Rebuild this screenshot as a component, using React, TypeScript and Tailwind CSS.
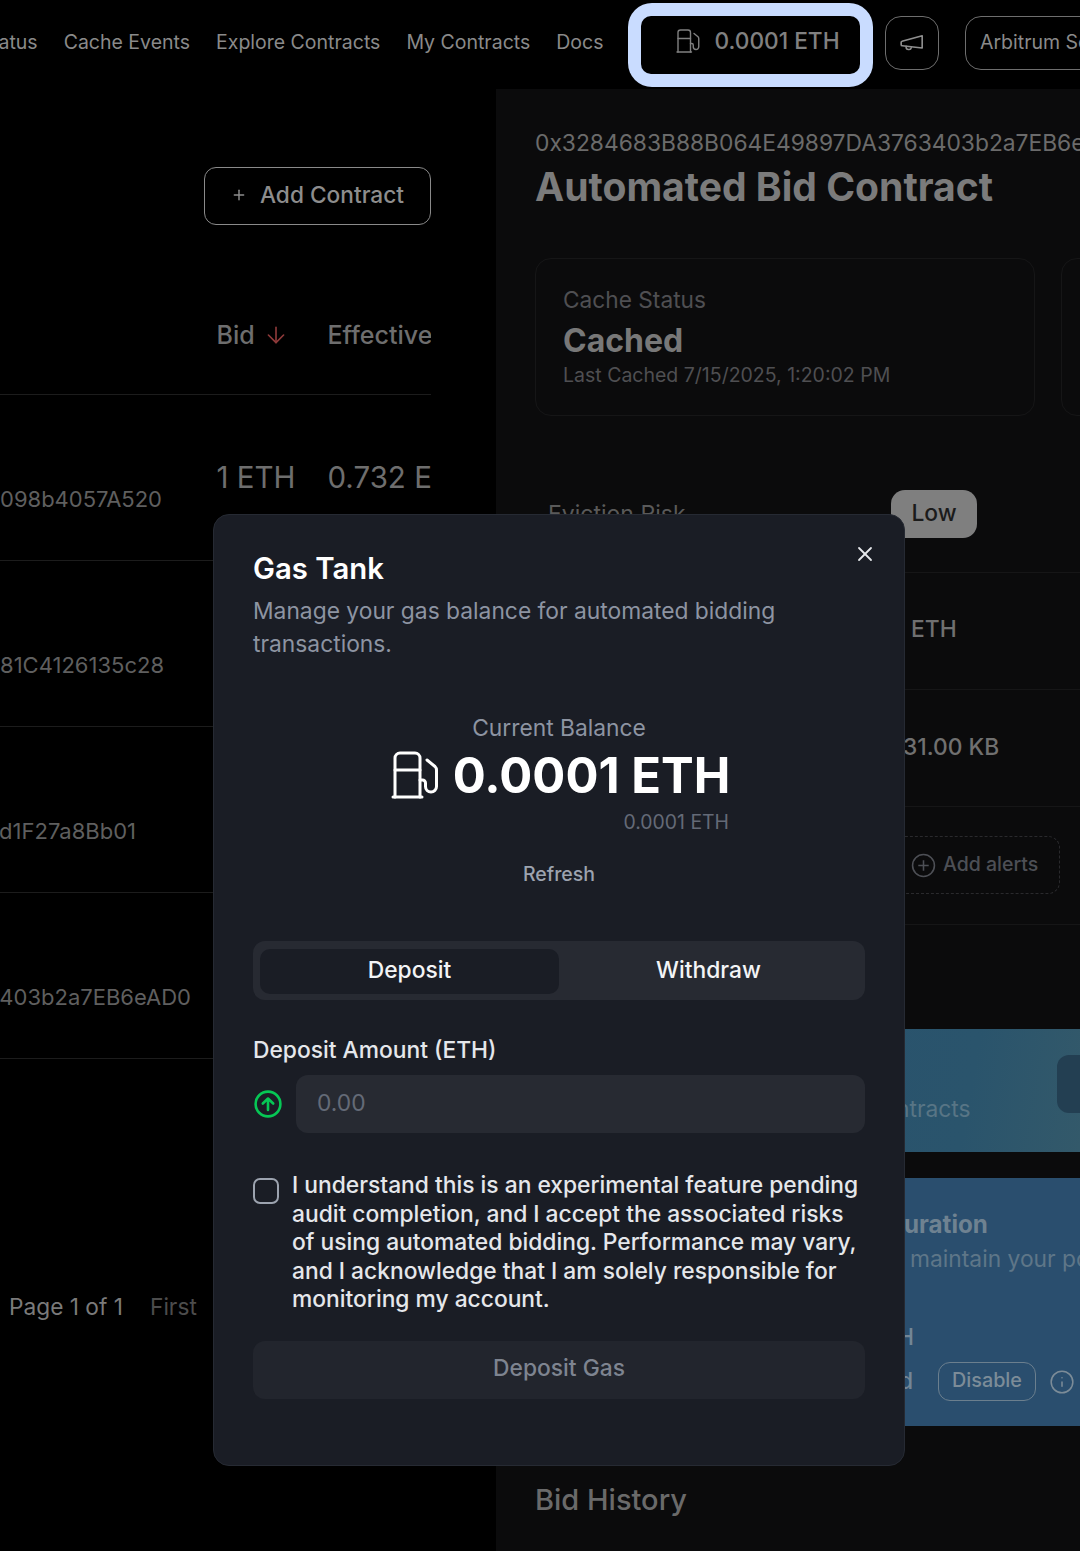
import { ArrowDown, Info, Plus, X } from "lucide-react";

const FONT = "font-['Inter','Noto_Sans',sans-serif]";

function FuelIcon({ className, strokeWidth = 3 }: { className?: string; strokeWidth?: number }) {
  return (
    <svg viewBox="6 4 48 50" fill="none" stroke="currentColor" strokeWidth={strokeWidth} strokeLinecap="round" strokeLinejoin="round" className={className}>
      <path d="M10 50V11a5 5 0 0 1 5-5h15a5 5 0 0 1 5 5v39" />
      <path d="M8 50h29" />
      <path d="M10 23h25" />
      <path d="M35 33h2.5a3 3 0 0 1 3 3v3.5a5.5 5.5 0 0 0 11 0V23a5 5 0 0 0-1.5-3.5L42 13" />
    </svg>
  );
}

function Megaphone({ className }: { className?: string }) {
  return (
    <svg viewBox="0 0 24 24" fill="none" stroke="currentColor" strokeWidth={1.5} strokeLinecap="round" strokeLinejoin="round" className={className}>
      <path d="M21.4 5.3v11.3L3 14.5a1 1 0 0 1-1-1v-2.1a1 1 0 0 1 .8-1z" />
      <path d="M6.6 15v1a2 2 0 0 0 2 2h.7a2 2 0 0 0 2-1.5" />
    </svg>
  );
}

function NavBar() {
  return (
    <header className="flex h-[89px] shrink-0 items-center whitespace-nowrap bg-black">
      <nav className="mb-[4px] ml-[-20.5px] flex shrink-0 items-center gap-[26px] text-[19.5px] text-[#8a8a8a]">
        <span>Status</span>
        <span>Cache Events</span>
        <span>Explore Contracts</span>
        <span>My Contracts</span>
        <span>Docs</span>
      </nav>
      <div className="ml-[24.5px] shrink-0 rounded-[24px] bg-[#c9dcff] p-[13px]">
        <div className="flex h-[58px] w-[219px] items-center justify-center gap-[14px] rounded-[10px] bg-black pb-[6px] pl-[15px] text-[22.7px] font-medium text-[#808080]">
          <FuelIcon className="h-[25px] w-[24px]" strokeWidth={2.8} />
          0.0001 ETH
        </div>
      </div>
      <div className="mb-[3px] ml-[12px] flex size-[54px] shrink-0 items-center justify-center rounded-[16px] border border-[#6e6e6e] text-[#8f8f8f]">
        <Megaphone className="size-[26px]" />
      </div>
      <div className="mb-[3px] ml-[26px] flex h-[54px] w-[200px] shrink-0 items-center rounded-[16px] border border-[#6e6e6e] pl-[14px] text-[19.5px] text-[#8a8a8a]">
        Arbitrum Sepolia
      </div>
    </header>
  );
}

const rows = [
  { addr: "098b4057A520", pad: "pr-[54.5px]" },
  { addr: "81C4126135c28", pad: "pr-[52.5px]" },
  { addr: "d1F27a8Bb01", pad: "pr-[80.5px]" },
  { addr: "403b2a7EB6eAD0", pad: "pr-[25.5px]" },
];

function LeftColumn() {
  return (
    <section className="flex w-[496px] shrink-0 flex-col bg-black">
      <div className="flex w-[431px] justify-end pt-[78px]">
        <div className="flex h-[58px] w-[227px] items-center justify-center gap-[13px] rounded-[12px] border border-[#8a8a8a] pb-[2px] text-[22.7px] font-medium text-[#8d8d8d]">
          <Plus className="size-[16px]" strokeWidth={2.2} />
          Add Contract
        </div>
      </div>
      <div className="w-[431px] overflow-hidden pt-[72px]">
        <div className="flex h-[98px] items-start border-b border-[#1c1c1c] pl-[216.5px] pt-[21px] text-[25px] leading-[34px] font-medium whitespace-nowrap text-[#6e6e6e]">
          <span className="flex h-[34px] w-[111px] shrink-0 items-center gap-[8px]">
            Bid <ArrowDown className="size-[26px] text-[#8f3a3a]" strokeWidth={1.5} />
          </span>
          <span className="h-[34px] shrink-0">Effective Bid</span>
        </div>
        {rows.map((row, i) => (
          <div key={row.addr} className="flex h-[166px] border-b border-[#1c1c1c] whitespace-nowrap">
            <div className={`flex w-[216.5px] shrink-0 justify-end pt-[88px] ${row.pad} text-[22px] leading-[33px] text-[#5f5f5f]`}>
              <span className="shrink-0">{row.addr}</span>
            </div>
            {i === 0 && (
              <div className="flex pt-[60px] text-[29.5px] text-[#6e6e6e]">
                <span className="w-[111px] shrink-0">1 ETH</span>
                <span className="shrink-0">0.732 ETH</span>
              </div>
            )}
          </div>
        ))}
      </div>
      <div className="flex gap-[27px] pl-[9px] pt-[231px] text-[22.7px] whitespace-nowrap">
        <span className="text-[#7a7a7a]">Page 1 of 1</span>
        <span className="text-[#4c4c4c]">First</span>
      </div>
    </section>
  );
}

function RightColumn() {
  return (
    <section className="min-w-0 flex-1 overflow-hidden bg-[#0b0b0c] pl-[39px]">
      <div className="whitespace-nowrap pt-[38px] text-[22.8px] leading-[32px] text-[#6b6b6b]">
        0x3284683B88B064E49897DA3763403b2a7EB6eAD0
      </div>
      <h1 className="mt-[6px] text-[39.1px] leading-[44px] font-bold whitespace-nowrap text-[#7b7b7b]">Automated Bid Contract</h1>
      <div className="mt-[49px] flex gap-[26px]">
        <div className="h-[158px] w-[500px] shrink-0 rounded-[16px] border border-[#161617] pl-[27px] pt-[25px]">
          <div className="text-[22.7px] leading-[32px] text-[#4f4f52]">Cache Status</div>
          <div className="mt-[6px] text-[32px] leading-[38px] font-bold text-[#787878]">Cached</div>
          <div className="mt-[1px] text-[19.5px] leading-[28px] whitespace-nowrap text-[#4f4f52]">Last Cached 7/15/2025, 1:20:02 PM</div>
        </div>
        <div className="h-[158px] w-[300px] shrink-0 rounded-[16px] border border-[#161617]" />
      </div>

      <div className="mt-[74px] flex h-[83px] border-b border-[#161617] pl-[13px]">
        <span className="w-[343px] pt-[7px] text-[23px] text-[#5a5a5a]">Eviction Risk</span>
        <span className="flex h-[48px] w-[86px] items-center justify-center rounded-[14px] bg-[#7f7f7f] pb-[2px] text-[22.8px] font-medium text-[#1b1b1b]">Low</span>
      </div>
      <div className="flex h-[117px] items-center border-b border-[#161617] pb-[4px] pl-[376px] text-[22.8px] font-medium text-[#707070]">
        ETH
      </div>
      <div className="flex h-[117px] items-center border-b border-[#161617] pb-[2px] pl-[368px] text-[22.8px] font-medium text-[#707070]">
        31.00 KB
      </div>
      <div className="flex h-[118px] items-center border-b border-[#161617] pb-[1px] pl-[338px]">
        <div className="flex h-[58px] w-[187px] items-center gap-[7px] rounded-[12px] border border-dashed border-[#2a2a2d] pl-[37px] text-[19.5px] font-medium whitespace-nowrap text-[#4d4f55]">
          <svg viewBox="0 0 24 24" fill="none" stroke="currentColor" strokeWidth={1.5} className="size-[25px] shrink-0">
            <circle cx="12" cy="12" r="10.5" />
            <path d="M12 7v10M7 12h10" />
          </svg>
          Add alerts
        </div>
      </div>

      <div className="-ml-[39px] mt-[104px] flex h-[123px] bg-[linear-gradient(100deg,#27506f,#2a546c_80%,#33596a)] pl-[400px] whitespace-nowrap">
        <span className="pt-[63px] text-[22.8px] text-[#587585]">ntracts</span>
        <div className="ml-[86px] mt-[26px] h-[58px] w-[80px] shrink-0 rounded-[12px] bg-[#233f52]" />
      </div>
      <div className="-ml-[39px] mt-[26px] h-[248px] bg-[#2a4e6e] pl-[408px] whitespace-nowrap">
        <div className="pt-[30px] text-[24.2px] leading-[34px] font-bold text-[#6f8291]">uration</div>
        <div className="ml-[6px] text-[22.8px] leading-[34px] text-[#5e7688]">maintain your position</div>
        <div className="-ml-[7px] mt-[47px] text-[22.8px] leading-[28px] font-medium text-[#738696]">H</div>
        <div className="-ml-[5px] mt-[11px] flex items-center">
          <span className="w-[39px] shrink-0 text-[22.8px] font-medium text-[#738696]">d</span>
          <div className="flex h-[39px] w-[98px] shrink-0 items-center justify-center rounded-[12px] border border-[#6b7f8e] pb-[2px] text-[19.8px] font-medium text-[#7c8c98]">Disable</div>
          <Info className="ml-[13px] size-[26px] shrink-0 text-[#7c8c98]" strokeWidth={1.4} />
        </div>
      </div>
      <h2 className="mt-[54px] text-[29px] leading-[40px] font-medium whitespace-nowrap text-[#6a6a6a]">Bid History</h2>
    </section>
  );
}

function GasTankDialog() {
  return (
    <div className="absolute left-[213px] top-[514px] h-[952px] w-[692px] rounded-[16px] border border-[#262a33] bg-[#1a1d25] px-[39px] pt-[35px]">
      <X className="absolute right-[27px] top-[27px] size-[24px] text-[#e5e7eb]" strokeWidth={1.8} />
      <h2 className="text-[29.3px] leading-[38px] font-semibold text-white">Gas Tank</h2>
      <p className="mt-[6px] w-[600px] text-[22.8px] leading-[33px] text-[#8d94a2]">
        Manage your gas balance for automated bidding transactions.
      </p>
      <div className="mt-[52px] flex flex-col items-center">
        <div className="text-[22.8px] leading-[32px] text-[#8d94a2]">Current Balance</div>
        <div className="ml-[3px] mt-[3px] flex items-center gap-[14px] text-[49px] leading-[58px] font-bold text-white">
          <FuelIcon className="h-[50px] w-[48px]" />
          0.0001 ETH
        </div>
        <div className="mt-[3px] w-full pr-[136px] text-right text-[19.4px] leading-[28px] text-[#646a77]">0.0001 ETH</div>
        <div className="mt-[24px] text-[19.5px] leading-[28px] font-medium text-[#9ca3af]">Refresh</div>
      </div>
      <div className="mt-[53px] flex h-[59px] items-center rounded-[12px] bg-[#272a32] px-[7px] pt-[2px] text-[22.8px] font-medium text-[#f3f4f6]">
        <div className="flex h-[45px] flex-1 items-center justify-center rounded-[10px] bg-[#1a1d25] pb-[3px]">Deposit</div>
        <div className="flex h-[45px] flex-1 items-center justify-center pb-[3px]">Withdraw</div>
      </div>
      <label className="mt-[34px] block text-[22.8px] leading-[32px] font-medium text-[#e5e7eb]">Deposit Amount (ETH)</label>
      <div className="mt-[9px] flex items-center gap-[14px]">
        <svg viewBox="0 0 28 28" fill="none" stroke="#06c755" strokeWidth={2.6} strokeLinecap="round" strokeLinejoin="round" className="ml-[1px] size-[28px] shrink-0">
          <circle cx="14" cy="14" r="12.4" />
          <path d="M14 20V8.5M8.8 13.5 14 8.5l5.2 5" />
        </svg>
        <div className="flex h-[58px] flex-1 items-center rounded-[12px] bg-[#272a32] pb-[2px] pl-[21px] text-[22.8px] text-[#646a77]">0.00</div>
      </div>
      <div className="mt-[38px] flex items-start gap-[13px]">
        <div className="mt-[7px] size-[26px] shrink-0 rounded-[7px] border-2 border-[#9ca3af]" />
        <p className="text-[22.8px] leading-[28.6px] font-medium text-[#e5e7eb]">
          I understand this is an experimental feature pending audit completion, and I accept the associated risks of using automated bidding. Performance may vary, and I acknowledge that I am solely responsible for monitoring my account.
        </p>
      </div>
      <div className="mt-[27px] flex h-[58px] items-center justify-center rounded-[12px] bg-[#22252d] pb-[3px] text-[22.8px] font-medium text-[#7e8490]">Deposit Gas</div>
    </div>
  );
}

export default function App() {
  return (
    <div className={`relative flex h-[1551px] w-[1080px] flex-col overflow-hidden bg-black ${FONT}`}>
      <NavBar />
      <main className="flex min-h-0 flex-1">
        <LeftColumn />
        <RightColumn />
      </main>
      <GasTankDialog />
    </div>
  );
}
